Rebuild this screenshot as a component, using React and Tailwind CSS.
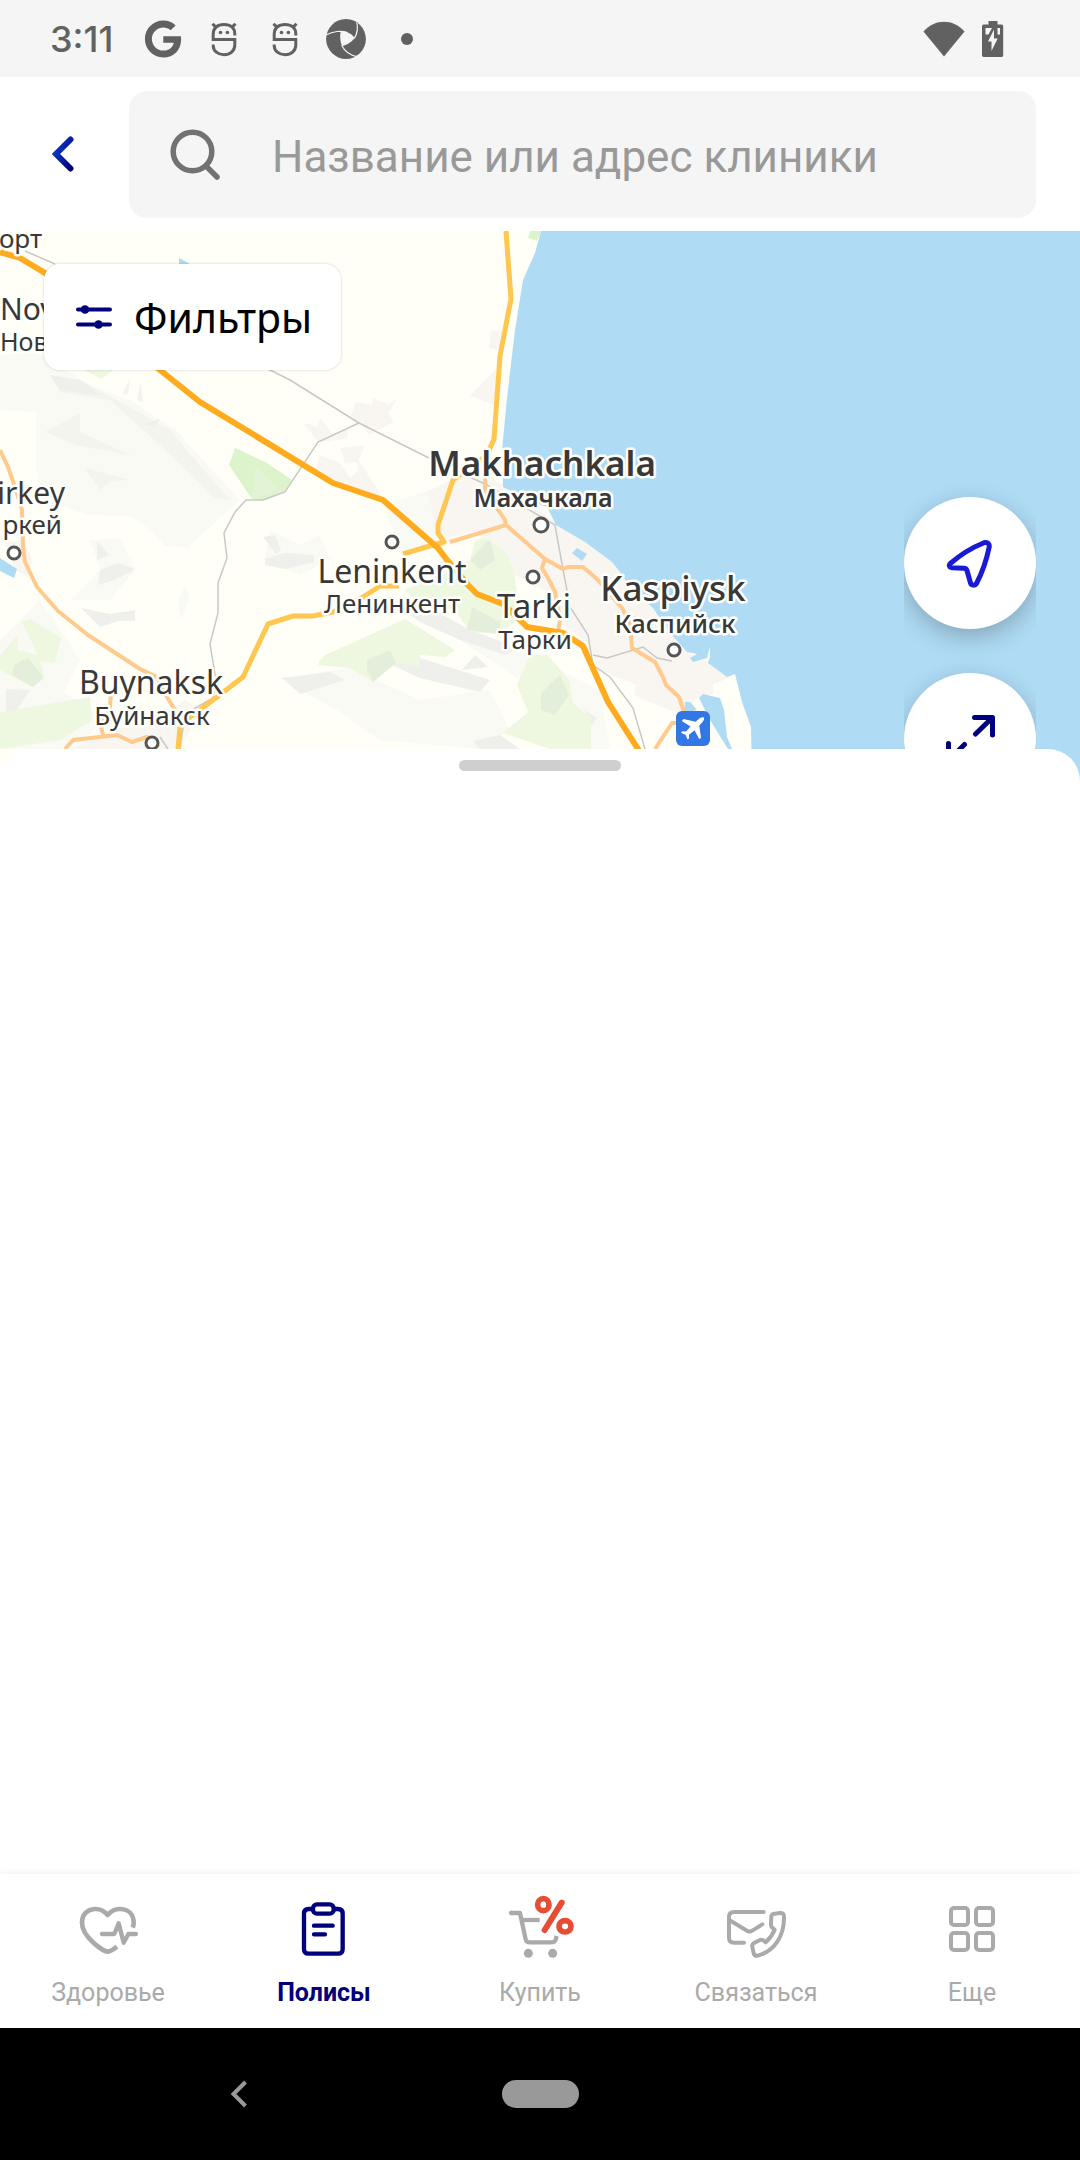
import React from "react";
import { FaGoogle } from "react-icons/fa";

function MascotIcon() {
  return (
    <svg className="size-10" viewBox="0 0 40 40" fill="none" stroke="#616161" strokeWidth="3" aria-hidden="true">
      <path d="M30.8 16.5V15C30.8 9 26.500 5.500 20 5.500S9.200 9 9.200 15V20.600H30.800V26C30.800 32 26 35.700 20 35.700S9.200 32 9.200 26.500V25.500" />
      <path d="M8.500 4.800l3.600 3.600M31.500 4.800l-3.600 3.600" />
      <circle cx="16.500" cy="13.500" r="1.800" fill="#616161" stroke="none" />
      <circle cx="23.400" cy="13.500" r="1.800" fill="#616161" stroke="none" />
    </svg>
  );
}

function ShutterIcon() {
  return (
    <svg className="size-10 overflow-visible" viewBox="0 0 41 41" aria-hidden="true">
      <circle cx="20.500" cy="20.500" r="20.400" fill="#616161" />
      <path d="M15 13.200C20 12.500 26 14 29.300 19.500C27 23 22 26.500 16.500 27.800C14.500 23 14 18 15 13.200Z" fill="#f5f5f5" />
      <g fill="none" stroke="#f5f5f5" strokeWidth="1.200">
        <path d="M0 16.500C7 12.500 16 11.500 22 14" />
        <path d="M31.500 3.500C33 9 32 15 29 20" />
        <path d="M16 27C19 33 25 37.500 32 38.500" />
      </g>
    </svg>
  );
}

function StatusBar() {
  return (
    <div className="flex h-[77px] items-center justify-between bg-[#f5f5f5] pl-[50px] pr-[76px] text-[#616161]">
      <div className="flex items-center gap-[21px]">
        <span className="w-[72px] font-[Inter,sans-serif] text-[36px] leading-none font-medium">3:11</span>
        <span className="flex size-10 items-center justify-center">
          <FaGoogle className="size-[38px]" aria-hidden="true" />
        </span>
        <MascotIcon />
        <MascotIcon />
        <ShutterIcon />
        <span className="flex size-10 items-center justify-center">
          <span className="size-3 rounded-full bg-[#616161]" />
        </span>
      </div>
      <div className="flex items-center gap-[15px]">
        <svg className="h-9 w-[42px]" viewBox="0 0 42 36" fill="#616161" aria-hidden="true">
          <path d="M.5 10.500C12-2.500 30-2.500 41.500 10.500L21 35.500Z" />
        </svg>
        <svg className="h-9 w-6" viewBox="-2 0 24 36" aria-hidden="true">
          <path d="M6.500 0H15.500V3.500H19.500A1.700 1.700 0 0 1 21.200 5.200V34.300A1.700 1.700 0 0 1 19.500 36H1.700A1.700 1.700 0 0 1 0 34.300V5.200A1.700 1.700 0 0 1 1.700 3.500H6.500Z" fill="#616161" />
          <path d="M3.500 7H10L6.500 13.500H3.500ZM15.500 7H18V13.500H15.500ZM12 8.500V17.500H15.700L9.500 30V20.500H6Z" fill="#f5f5f5" />
        </svg>
      </div>
    </div>
  );
}

function SearchHeader() {
  return (
    <header className="flex h-[154px] items-center bg-white pr-11">
      <button type="button" aria-label="Назад" className="flex h-32 w-[129px] items-center pl-[52px]">
        <svg className="h-9 w-6" viewBox="0 0 24 36" fill="none" aria-hidden="true">
          <defs>
            <linearGradient id="back" x1="0" y1="0" x2="1" y2="1">
              <stop offset="0" stopColor="#0a3fd0" />
              <stop offset="1" stopColor="#00007c" />
            </linearGradient>
          </defs>
          <path d="M18.500 3.500L4 18L18.500 32.500" stroke="url(#back)" strokeWidth="6" strokeLinecap="round" />
        </svg>
      </button>
      <label className="flex h-[127px] flex-1 items-center gap-[51px] rounded-[18px] bg-[#f5f5f5] pl-10 pr-4">
        <svg className="size-[52px] shrink-0" viewBox="0 0 52 52" fill="none" stroke="#727272" strokeWidth="5.500" aria-hidden="true">
          <circle cx="23.500" cy="23.500" r="19.300" />
          <path d="M37 38L48 49" strokeLinecap="round" />
        </svg>
        <span className="sr-only">Поиск клиники</span>
        <input
          type="search"
          placeholder="Название или адрес клиники"
          className="h-full w-full min-w-0 bg-transparent pt-1.5 text-[44px] outline-none placeholder:text-[#999999]"
        />
      </label>
    </header>
  );
}

const LABELS = [
  { text: "орт", x: 42, y: 248, size: 26, anchor: "end" },
  { text: "Nov", x: 0, y: 320, size: 30, anchor: "start" },
  { text: "Нов", x: 0, y: 351, size: 25, anchor: "start" },
  { text: "irkey", x: 65, y: 504, size: 30, anchor: "end" },
  { text: "ркей", x: 62, y: 534, size: 26, anchor: "end" },
  { text: "Buynaksk", x: 151, y: 694, size: 32, anchor: "middle" },
  { text: "Буйнакск", x: 152, y: 725, size: 26, anchor: "middle" },
  { text: "Leninkent", x: 392, y: 583, size: 32, anchor: "middle" },
  { text: "Ленинкент", x: 392, y: 613, size: 26, anchor: "middle" },
  { text: "Makhachkala", x: 542, y: 476, size: 35, anchor: "middle", weight: 600 },
  { text: "Махачкала", x: 543, y: 507, size: 25, anchor: "middle", weight: 600 },
  { text: "Tarki", x: 534, y: 618, size: 33, anchor: "middle" },
  { text: "Тарки", x: 535, y: 649, size: 26, anchor: "middle" },
  { text: "Kaspiysk", x: 673, y: 601, size: 35, anchor: "middle", weight: 500 },
  { text: "Каспийск", x: 675, y: 633, size: 26, anchor: "middle", weight: 500 },
];

const TOWNS = [
  [14, 553, 6],
  [152, 743, 6],
  [392, 542, 6],
  [541, 525, 7],
  [533, 577, 6],
  [674, 650, 6],
];

function MapDrawing() {
  return (
    <svg className="block h-full w-full" viewBox="0 231 1080 551" preserveAspectRatio="xMidYMin slice" role="img" aria-label="Карта: Махачкала и окрестности">
      <rect x="0" y="231" width="1080" height="551" fill="#fffff7" />

      {/* relief */}
      <g fill="#fafaf4">
        <path d="M0 355L37 352L90 385L130 400L175 430L240 500L190 545L150 530L110 500L60 480L36 470L36 412L0 410Z" />
        <path d="M36 460L80 470L130 500L150 517L90 515L40 500Z" />
        <path d="M0 640L40 600L80 660L60 700L0 740Z" />
        <path d="M150 530L195 528L190 548L165 546Z" />
        <path d="M70 600L100 570L90 540L120 538L135 570L110 600Z" />
        <path d="M178 600L185 586L190 597L181 620Z" />
        <path d="M385 505L430 490L500 520L450 542L400 554Z" />
        <path d="M265 560L270 530L300 545L320 535L330 560L300 575Z" />
        <path d="M300 675L350 668L420 700L490 690L510 730L480 749L380 740L340 712L300 690Z" />
        <path d="M0 749L0 700L60 690L110 720L65 749Z" />
        <path d="M400 600L520 650L600 690L610 749L560 749L520 680Z" />
      </g>
      <g fill="#f4f4ee">
        <path d="M50 375L80 380L135 410L170 430L195 460L230 500L215 498L160 445L110 400L60 392Z" />
        <path d="M80 413V432L130 455L75 445L45 432Z" />
        <path d="M85 468L130 480L110 481L100 490Z" />
        <path d="M122 395L130 378L128 394ZM137 400L141 382L143 402Z" />
      </g>
      <g fill="#efefeb">
        <path d="M50 375L80 380L100 395L60 390Z" />
        <path d="M144 424L160 419L155 427Z" />
        <path d="M97 541L109 555L97 560Z" />
        <path d="M100 570L118 563L135 569L115 580L98 585Z" />
        <path d="M81 608L110 614L135 610L135 621L118 621L100 627Z" />
        <path d="M265 559L284 553L314 555L314 562L285 569L265 565Z" />
        <path d="M263 537L275 535L281 550L276 554Z" />
        <path d="M282 678L330 672L345 680L300 694Z" />
        <path d="M6 689L30 690L15 712L6 715Z" />
        <path d="M393 602L425 605L470 630L520 648L505 655L460 640L420 622Z" />
        <path d="M385 662L420 658L490 680L480 692L420 678Z" />
        <path d="M462 670L475 655L488 667Z" />
        <path d="M473 741L500 735L520 749L480 749Z" />
        <path d="M585 710L597 718L590 728Z" />
      </g>

      {/* forests */}
      <g fill="#eef7e0">
        <path d="M22 622L30 619L61 638L55 663L40 661L44 675L33 687L0 670L0 655L17 636L18 650L38 655Z" />
        <path d="M0 712L90 697L92 720L60 740L0 749Z" />
        <path d="M83 370L113 370L102 379Z" />
        <path d="M318 665L325 655L405 619L455 650L445 657L420 655L420 667L396 663L373 682L350 668Z" />
        <path d="M405 590L470 560L475 540L492 536L513 560L517 595L530 610L500 634L470 632L455 610L415 600Z" />
        <path d="M517 685L530 655L548 655L569 680L573 703L591 718L591 749L550 749L503 733L528 712Z" />
        <path d="M318 663L325 655L360 643L360 665Z" />
      </g>
      <g fill="#e3efdb">
        <path d="M14 665L28 658L44 678L33 687L12 675Z" />
        <path d="M367 660L390 650L396 663L373 682L367 670Z" />
        <path d="M467 630L472 607L500 622L500 634Z" />
        <path d="M541 693L560 675L569 695L555 715L541 710Z" />
        <path d="M470 560L490 538L495 560L480 570Z" />
      </g>
      <path d="M235 448L267 463L292 480L283 493L263 500L252 499L229 465Z" fill="#dcf3cb" />
      <path d="M252 499L256 465L280 492Z" fill="#e3f3d6" />
      <path d="M530 231H541L537 241L528 238Z" fill="#dcf3cb" />

      {/* built-up areas */}
      <g fill="#f9f6f1">
        <path d="M356 402L372 405L373 398L388 404L397 399L388 413L394 422L370 435L360 423L351 416Z" />
        <path d="M304 423L318 427L320 418L333 434L348 430L347 439L318 442Z" />
        <path d="M320 455L340 463L350 478L358 470L355 455L385 500L335 483L315 470Z" />
        <path d="M340 448L365 445L358 462L345 463Z" />
        <path d="M491 330L502 331L499 350L489 348Z" />
        <path d="M470 396L497 368L494 405Z" />
        <path d="M427 492L470 470L503 484L545 515L585 542L612 562L653 608L687 652L735 676L713 684L713 694L696 698L684 716L645 700L634 695L636 685L600 670L585 640L555 620L545 590L515 575L505 550L470 530L440 540Z" />
        <path d="M5 543L22 540L33 560L28 577L15 570Z" />
        <path d="M90 740L120 728L150 725L170 710L185 700L200 710L180 749H70Z" />
      </g>

      {/* sea and ponds */}
      <g fill="#afdbf5">
        <path d="M541 231L535 253L523 280L515 330L507 398L502 450L503 487L538 504L547 507L556 525L585 542L612 562L620 572L630 587L653 608L670 633L687 652L697 654L690 658L693 662L707 658L710 647L710 657L708 663L727 677L735 674L742 702L751 727L752 782H1080V231Z" />
        <path d="M699 698L703 694L720 698L724 710L727 737L732 749V782H728V749L710 720Z" />
        <path d="M685 702H690L697 710L684 713Z" />
        <path d="M572 553L577 548L587 554L582 561Z" />
        <path d="M179 258L190 264H179Z" />
        <path d="M0 558L17 569L14 578L0 571Z" />
      </g>

      {/* railways */}
      <g fill="none" stroke="#c8c9c7" strokeWidth="1.500">
        <path d="M25 251L55 264M260 365L290 380L359 423L427 457L487 485L555 525L560 553L565 580L570 607L588 635L593 665L610 677L633 708L645 749L655 782" />
        <path d="M359 423L318 442L285 492L263 500H246L235 512L224 533L227 558L218 583V613L210 644L216 680L213 698L195 708L183 728L180 749V782" />
        <path d="M593 655L607 658L643 647L657 658L672 661M160 737L168 749" />
      </g>

      {/* roads */}
      <g fill="none" strokeLinejoin="round">
        <g stroke="#ffca8c" strokeWidth="4">
          <path d="M0 450L8 467L15 487L22 510L23 547L25 562L37 587L58 611L88 635L140 669L157 677L167 697L175 710" />
          <path d="M111 693L110 707L101 727L103 735M65 749L73 740L117 735L132 742L147 737L159 747" />
          <path d="M450 542L506 525L505 520L485 490V475M506 525L545 559L542 568L548 578L555 592L560 620L558 632" />
          <path d="M545 559L563 569L568 567H583L598 580L622 608L630 623L632 648L655 662L663 677L666 685L679 697L684 712M655 749L672 723H680" />
        </g>
        <g stroke="#ffc650" strokeWidth="5">
          <path d="M506 231L511 299L500 356L494 439L487 455L453 480L438 525V533L444 542L433 545L403 554" />
          <path d="M399 586H380L363 597L333 612L313 616H293L268 624L243 677L217 697L190 717L180 727L178 749" />
        </g>
        <path d="M0 252L20 258L45 273L100 318L160 370L200 402L333 483L383 500L438 548L447 560L468 585L477 594L503 604L513 613L527 627L563 633L583 646L608 702L638 749L655 775" stroke="#ffab1d" strokeWidth="6" />
      </g>

      {TOWNS.map(([cx, cy, r]) => (
        <circle key={cx} cx={cx} cy={cy} r={r} fill="#fff" stroke="#555" strokeWidth="3" />
      ))}

      <g fontFamily="'Noto Sans', sans-serif" fill="#383838" stroke="#fffffb" strokeWidth="5" strokeLinejoin="round" paintOrder="stroke">
        {LABELS.map((l) => (
          <text key={l.text} x={l.x} y={l.y} fontSize={l.size} fontWeight={l.weight || 400} textAnchor={l.anchor}>
            {l.text}
          </text>
        ))}
      </g>

      {/* airport */}
      <rect x="676" y="711" width="34" height="35" rx="6" fill="#3377e4" />
      <path
        d="M703.800 717.500C702.500 716.800 700.500 717.400 698.500 719.200L695.500 721.800L683.500 719L681.800 721L690.500 726.500L686 731.500L682.300 731.200L681 732.700L685.700 735L687.500 739.500L689 738.500V734.800L694.500 730.300L699.300 739.200L701 737.700L699.300 725.500L702.300 722.300C704 720.300 704.600 718.600 703.800 717.500Z"
        fill="#fff"
      />
    </svg>
  );
}

function MapArea() {
  return (
    <section className="relative h-[551px] overflow-hidden">
      <MapDrawing />
      <button type="button" className="absolute top-[33px] left-11 flex h-[106px] w-[297px] items-center gap-[22px] rounded-2xl bg-white pl-8 shadow-[0_0_3px_rgba(0,0,0,0.18)]">
        <svg className="h-6 w-9 shrink-0" viewBox="0 0 36 24" aria-hidden="true">
          <path d="M2 4.500H34M2 19.500H34" stroke="#00007c" strokeWidth="4" strokeLinecap="round" />
          <circle cx="9" cy="4.500" r="4.300" fill="#00007c" />
          <circle cx="22.500" cy="19.500" r="4.300" fill="#00007c" />
        </svg>
        <span className="font-['Noto_Sans',sans-serif] text-[41px] leading-none text-black">Фильтры</span>
      </button>
      <div className="absolute top-[246px] right-11 flex flex-col gap-11 overflow-clip pt-5 pb-8">
        <button type="button" aria-label="Моё местоположение" className="flex size-[132px] items-center justify-center rounded-full bg-white shadow-[0_8px_24px_rgba(0,0,0,0.24)]">
          <svg className="size-[50px]" viewBox="0 0 50 50" fill="none" stroke="#1a1ad6" strokeWidth="5" strokeLinejoin="round" aria-hidden="true">
            <path d="M5.300 25.500C15 17 27 9.500 39 4.700C42 3.700 44.700 5.800 44.200 9C41.500 22 37 35 31.500 45.500C29.800 48 26.500 47.500 25.500 45L22 32.500C21.500 31.200 20.500 30.300 19 30.200L7 29.700C4.300 29.500 3.500 27.300 5.300 25.500Z" />
          </svg>
        </button>
        <button type="button" aria-label="Развернуть карту" className="flex size-[132px] items-center justify-center rounded-full bg-white shadow-[0_8px_24px_rgba(0,0,0,0.24)]">
          <svg className="size-[50px]" viewBox="0 0 50 50" fill="none" stroke="#00007c" strokeWidth="5" strokeLinecap="round" strokeLinejoin="round" aria-hidden="true">
            <path d="M29.500 3.500H47.500V21M30.500 20L46.500 4.500M19.500 30.500L3.500 46.500M3.500 29.500V47.500H21" />
          </svg>
        </button>
      </div>
    </section>
  );
}

function HealthIcon() {
  return (
    <svg className="size-[66px]" viewBox="225 105 198 198" fill="none" stroke="#aaaaaa" strokeWidth="14" strokeLinejoin="round" aria-hidden="true">
      <path d="M351 260C338 270 330 275 323 275C312 275 246 232 246 188C246 163 262 148 284 147C302 146 313 153 323 165C333 153 345 146 362 147C385 148 401 163 401 188Q401 196 398 203" />
      <path d="M306 222H343L356 190L371 248L385 222H408" strokeLinecap="round" strokeWidth="13" />
    </svg>
  );
}

function PolicyIcon() {
  return (
    <svg className="size-[66px]" viewBox="873 105 198 198" fill="none" stroke="#00007c" strokeWidth="13" strokeLinecap="round" aria-hidden="true">
      <path d="M936 147H926Q912 147 912 161V267Q912 281 926 281H1014Q1028 281 1028 267V161Q1028 147 1014 147H1004" />
      <rect x="939" y="133" width="62" height="28" rx="12" />
      <path d="M942 197H998M942 223H975" />
    </svg>
  );
}

function BuyIcon() {
  return (
    <svg className="size-[66px] overflow-visible" viewBox="231 105 198 198" fill="none" aria-hidden="true">
      <g stroke="#aaaaaa" strokeWidth="13" strokeLinejoin="round">
        <path d="M243 159H270L287 238Q289 247 299 247H364Q374 247 377 239L380 228" />
        <path d="M276 180H329" />
        <path d="M243 159h2" strokeLinecap="round" />
      </g>
      <circle cx="295" cy="280" r="13.500" fill="#aaaaaa" />
      <circle cx="368" cy="280" r="13.500" fill="#aaaaaa" />
      <g stroke="#e54d35">
        <ellipse cx="340" cy="134" rx="17" ry="18" strokeWidth="17" />
        <ellipse cx="405" cy="199" rx="18" ry="17" strokeWidth="17" />
        <path d="M395 128L344 210" strokeWidth="18" strokeLinecap="round" />
      </g>
    </svg>
  );
}

function ContactIcon() {
  return (
    <svg className="size-[66px]" viewBox="879 105 198 198" fill="none" stroke="#aaaaaa" strokeWidth="12" strokeLinecap="round" strokeLinejoin="round" aria-hidden="true">
      <path d="M1001 156H912Q897 156 897 171V233Q897 248 912 248H942" />
      <path d="M899 181L951 212Q959 217 967 212L997 193" />
      <path d="M1029 162L1050 159Q1062 158 1062 170C1063 228 1034 272 984 287Q973 289 971 279L967 261Q965 253 972 249L990 240Q996 238 1001 242L1007 247C1020 235 1027 226 1034 209L1026 202Q1022 198 1023 192L1024 170Q1024 164 1029 162Z" />
    </svg>
  );
}

function MoreIcon() {
  return (
    <svg className="size-[66px]" viewBox="417 105 198 198" fill="none" stroke="#aaaaaa" strokeWidth="12" aria-hidden="true">
      <rect x="453" y="144" width="51" height="51" rx="9" />
      <rect x="528" y="144" width="51" height="51" rx="9" />
      <rect x="453" y="219" width="51" height="51" rx="9" />
      <rect x="528" y="219" width="51" height="51" rx="9" />
    </svg>
  );
}

const TABS = [
  { label: "Здоровье", Icon: HealthIcon },
  { label: "Полисы", Icon: PolicyIcon, active: true },
  { label: "Купить", Icon: BuyIcon },
  { label: "Связаться", Icon: ContactIcon },
  { label: "Еще", Icon: MoreIcon },
];

function TabBar() {
  return (
    <nav className="relative grid h-[154px] grid-cols-5 bg-white shadow-[0_0_8px_rgba(0,0,0,0.08)]">
      {TABS.map(({ label, Icon, active }) => (
        <a
          key={label}
          href="#"
          aria-current={active ? "page" : undefined}
          className={
            active
              ? "flex flex-col items-center gap-4 pt-[21px] text-[25px] leading-8 font-bold text-[#00007c]"
              : "flex flex-col items-center gap-4 pt-[21px] text-[25px] leading-8 text-[#aaaaaa]"
          }
        >
          <Icon />
          {label}
        </a>
      ))}
    </nav>
  );
}

function SystemBar() {
  return (
    <div className="grid h-[132px] grid-cols-[1fr_auto_1fr] items-center bg-black">
      <button type="button" aria-label="Системная кнопка назад" className="ml-[215px] flex size-12 items-center justify-center">
        <svg className="h-7 w-[18px]" viewBox="0 0 18 28" fill="none" stroke="#999999" strokeWidth="4" aria-hidden="true">
          <path d="M15.500 2L3.500 14L15.500 26" />
        </svg>
      </button>
      <button type="button" aria-label="Домой" className="h-7 w-[77px] rounded-full bg-[#999999]" />
    </div>
  );
}

export default function App() {
  return (
    <div className="flex min-h-screen flex-col bg-white font-[Roboto,sans-serif]">
      <StatusBar />
      <SearchHeader />
      <main className="flex flex-1 flex-col">
        <MapArea />
        <section className="relative -mt-[33px] flex-1 rounded-t-[32px] bg-white pt-[11px]" aria-label="Список клиник">
          <div className="mx-auto h-[11px] w-[162px] rounded-full bg-[#cfcfcf]" />
        </section>
      </main>
      <TabBar />
      <SystemBar />
    </div>
  );
}
